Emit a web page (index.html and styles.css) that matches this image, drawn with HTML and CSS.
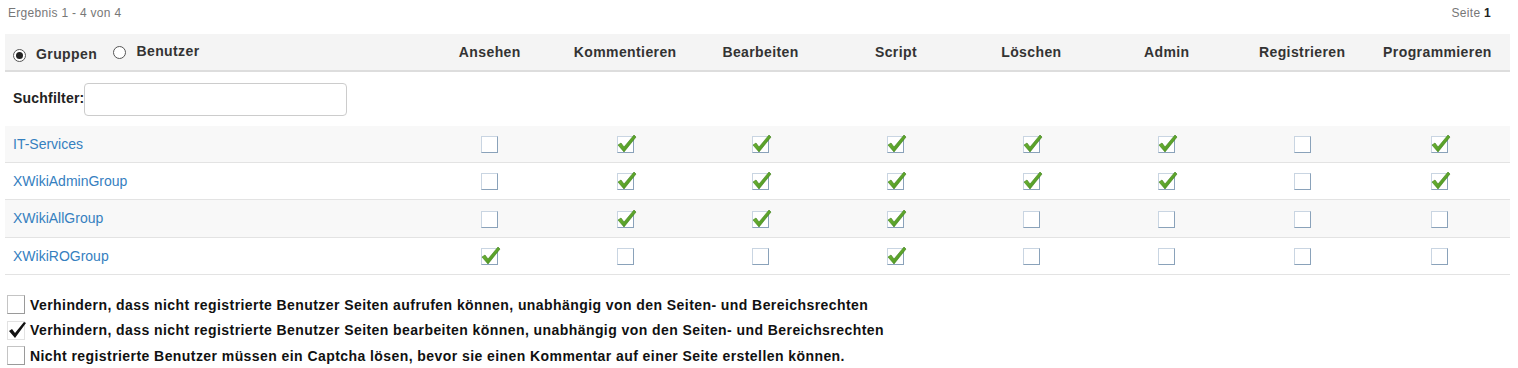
FILE: index.html
```html
<!DOCTYPE html>
<html lang="de">
<head>
    <meta charset="UTF-8">
    <title>Rechte</title>
    <link rel="stylesheet" href="styles.css">
</head>
<body>
    <div class="pager">
        <span class="pager-info">Ergebnis 1 - 4 von 4</span>
        <span class="pager-page">Seite <b>1</b></span>
    </div>

    <table class="rights">
        <colgroup>
            <col class="col-name">
            <col class="col-right"><col class="col-right"><col class="col-right"><col class="col-right">
            <col class="col-right"><col class="col-right"><col class="col-right"><col class="col-last">
        </colgroup>
        <tr class="head">
            <th class="name">
                <label class="radio"><span class="dot on"></span>Gruppen</label>
                <label class="radio"><span class="dot"></span>Benutzer</label>
            </th>
            <th>Ansehen</th>
            <th>Kommentieren</th>
            <th>Bearbeiten</th>
            <th>Script</th>
            <th>Löschen</th>
            <th>Admin</th>
            <th>Registrieren</th>
            <th class="last">Programmieren</th>
        </tr>
        <tr class="filter">
            <td class="name"><label>Suchfilter:</label><input type="text" class="search"></td>
            <td colspan="8"></td>
        </tr>
        <tbody id="rows"></tbody>
    </table>

    <div class="options">
        <label class="opt"><span class="box"></span>Verhindern, dass nicht registrierte Benutzer Seiten aufrufen können, unabhängig von den Seiten- und Bereichsrechten</label>
        <label class="opt"><span class="box checked"><svg viewBox="0 0 20 20" width="20" height="20"><path d="M2 11 L5 9 L8 13 L17 2 L19 3 L8 18 Z" fill="#111"/></svg></span>Verhindern, dass nicht registrierte Benutzer Seiten bearbeiten können, unabhängig von den Seiten- und Bereichsrechten</label>
        <label class="opt"><span class="box"></span>Nicht registrierte Benutzer müssen ein Captcha lösen, bevor sie einen Kommentar auf einer Seite erstellen können.</label>
    </div>

<script>
// Gruppen und ihre Rechte (1 = erlaubt)
const groups = [
    { name: 'IT-Services',     rights: [0,1,1,1,1,1,0,1] },
    { name: 'XWikiAdminGroup', rights: [0,1,1,1,1,1,0,1] },
    { name: 'XWikiAllGroup',   rights: [0,1,1,1,0,0,0,0] },
    { name: 'XWikiROGroup',    rights: [1,0,0,1,0,0,0,0] }
];

const check = '<svg class="tick" viewBox="0 0 20 20" width="20" height="20">' +
    '<defs><linearGradient id="g" x1="0" y1="0" x2="1" y2="1">' +
    '<stop offset="0" stop-color="#7cc13a"/><stop offset="1" stop-color="#3f8a1c"/></linearGradient></defs>' +
    '<path d="M1 11 L4 9 L7 13 L17 1 L19 3 L7 18 Z" fill="url(#g)" stroke="#3c7d1a" stroke-width="0.6"/></svg>';

const rows = document.getElementById('rows');
groups.forEach((g, i) => {
    const tr = document.createElement('tr');
    tr.className = i % 2 === 0 ? 'odd' : 'even';
    let html = '<td class="name"><a href="#">' + g.name + '</a></td>';
    g.rights.forEach((r, j) => {
        html += '<td' + (j === 7 ? ' class="last"' : '') + '><span class="cb">' + (r ? check : '') + '</span></td>';
    });
    tr.innerHTML = html;
    rows.appendChild(tr);
});
</script>
</body>
</html>
```
FILE: styles.css
```css
body{
    margin:0;
    font-family:"Liberation Sans", Arial, sans-serif;
    color:#222;
}
.pager{
    display:flex;
    justify-content:space-between;
    padding:6px 27px 0 8px;
    height:28px;
    font-size:12px;
    letter-spacing:0.3px;
    color:#777;
}
.pager-page b{
    color:#222;
}
.rights{
    margin-left:5px;
    width:1505px;
    border-collapse:collapse;
    table-layout:fixed;
}
.col-name{
    width:417px;
}
.col-right{
    width:135.4px;
}
.col-last{
    width:140px;
}
.rights th{
    height:36px;
    background:#f4f4f4;
    border-bottom:2px solid #ddd;
    font-size:14px;
    letter-spacing:0.4px;
    color:#333;
    text-align:center;
    padding:0;
}
.rights .last{
    padding-right:5px;
}
.rights th.name{
    text-align:left;
    padding-left:8px;
}
.radio{
    display:inline-flex;
    align-items:center;
    margin-right:12px;
}
.dot{
    width:11px;
    height:11px;
    border:1px solid #555;
    border-radius:50%;
    margin-right:10px;
    margin-top:3px;
    display:inline-flex;
    align-items:center;
    justify-content:center;
    background:#fff;
}
.dot.on::after{
    content:"";
    width:7px;
    height:7px;
    border-radius:50%;
    background:#222;
}
.filter td{
    height:54px;
    padding:0;
}
.filter td.name{
    padding-left:8px;
    font-weight:bold;
    font-size:14px;
    letter-spacing:0.2px;
    white-space:nowrap;
}
.search{
    width:263px;
    height:33px;
    box-sizing:border-box;
    border:1px solid #ccc;
    border-radius:4px;
    vertical-align:middle;
    margin:0;
}
#rows td{
    height:36.2px;
    padding:0;
    text-align:center;
    border-bottom:1px solid #e3e3e3;
}
#rows tr.odd td{
    background:#f8f8f8;
}
#rows td.name{
    text-align:left;
    padding-left:8px;
    font-size:14px;
}
#rows a{
    color:#3580bf;
    text-decoration:none;
}
.cb{
    display:inline-block;
    position:relative;
    width:15px;
    height:15px;
    border:1px solid;
    border-color:#c9d5e2 #8aa2ba #8aa2ba #c9d5e2;
    background:#fff;
    vertical-align:middle;
}
.tick{
    position:absolute;
    left:-1px;
    top:-3px;
}
.options{
    padding:17px 0 0 7px;
}
.opt{
    display:flex;
    align-items:center;
    height:25.5px;
    font-size:14px;
    font-weight:bold;
    letter-spacing:0.43px;
    color:#111;
}
.box{
    position:relative;
    width:16px;
    height:17px;
    border:1px solid #b5b5b5;
    border-color:#c4c4c4 #9a9a9a #9a9a9a #c4c4c4;
    margin-right:5px;
    background:#fff;
    flex:none;
}
.box.checked{
    border-color:#e2e2e2;
}
.box svg{
    position:absolute;
    left:-1px;
    top:-2px;
}
```
